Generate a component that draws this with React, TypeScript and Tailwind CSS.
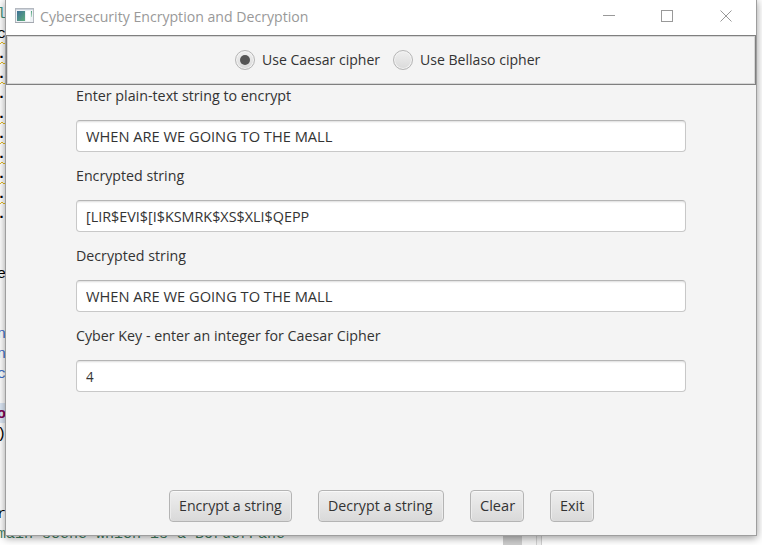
import { useLayoutEffect, useRef, useState } from "react";

/* Text condensed horizontally so that it spans a given width. */
function Fit({ text, width }: { text: string; width: number }) {
  const ref = useRef<HTMLSpanElement>(null);
  const [scale, setScale] = useState(1);
  useLayoutEffect(() => {
    if (ref.current) {
      setScale(width / ref.current.offsetWidth);
    }
  }, [text, width]);
  return (
    <span className="inline-flex whitespace-pre" style={{ width }}>
      <span ref={ref} className="shrink-0 origin-left" style={{ transform: `scaleX(${scale})` }}>
        {text}
      </span>
    </span>
  );
}

type CodeLine = { text: string; color?: string; warn?: boolean };

const blank: CodeLine = { text: "" };
const dot = "font-bold";
const code: CodeLine[] = [
  { text: "l", color: "text-[#3f8f78]" },
  { text: "c", warn: true },
  { text: ".", color: dot, warn: true },
  { text: ".", color: dot, warn: true },
  { text: ".", color: dot },
  { text: ".", color: dot, warn: true },
  { text: ".", color: dot, warn: true },
  { text: ".", color: dot, warn: true },
  { text: ".", color: dot, warn: true },
  { text: ".", color: dot, warn: true },
  { text: ".", color: dot },
  blank,
  blank,
  { text: "e" },
  blank,
  blank,
  { text: "n", color: "text-[#3f6fc8]" },
  { text: "n", color: "text-[#3f6fc8]" },
  { text: "c", color: "text-[#3f6fc8]" },
  blank,
  { text: "o", color: "w-[6px] text-[#7f0055] font-bold bg-[#dde8f6]" },
  { text: ")" },
  blank,
  blank,
  blank,
  { text: "r" },
  { text: "main scene which is a BorderPane", color: "text-[#3f7f5f]" },
];

function Squiggle() {
  return (
    <svg className="absolute left-0 top-[18px]" width="9" height="4" fill="none" stroke="#e8bc20">
      <path d="M0 3 L2 1 L4 3 L6 1 L8 3" />
    </svg>
  );
}

function Editor() {
  return (
    <div className="h-full pt-[3px] font-['Liberation_Mono',monospace] text-[15px] leading-[24px] text-black">
      {code.map((line, i) => (
        <div key={i} className={`relative h-[20px] ${line.color ?? ""}`}>
          <span className="-ml-[3px] whitespace-pre">{line.text}</span>
          {line.warn && <Squiggle />}
        </div>
      ))}
    </div>
  );
}

function AppIcon() {
  return (
    <svg width="19" height="16" viewBox="0 0 19 16">
      <defs>
        <linearGradient id="pane" x1="0" y1="0" x2="1" y2="1">
          <stop offset="0" stopColor="#3d6f96" />
          <stop offset="1" stopColor="#5fae7c" />
        </linearGradient>
        <linearGradient id="strip" x1="0" y1="0" x2="0" y2="1">
          <stop offset="0" stopColor="#4f9f7c" />
          <stop offset="1" stopColor="#b5dcc6" />
        </linearGradient>
      </defs>
      <rect x=".5" y=".5" width="18" height="14" fill="#eef2f5" stroke="#b4b9c0" />
      <rect x="1" y="1" width="17" height="1" fill="#cdd3dc" />
      <rect x="2" y="3" width="8" height="10" fill="url(#pane)" />
      <rect x="11" y="3" width="4" height="10" fill="#fff" />
      <rect x="16" y="3" width="1" height="6" fill="url(#strip)" />
      <rect x="0" y="14" width="19" height="1" fill="#a4a8b0" />
    </svg>
  );
}

function Radio({ text, width, checked }: { text: string; width: number; checked?: boolean }) {
  return (
    <label className="flex items-center gap-[7px]">
      <span className="flex size-5 items-center justify-center rounded-full border border-[#b6b6b6] bg-linear-to-b from-[#efefef] to-[#dadada] shadow-[inset_0_0_0_1px_#f4f4f4]">
        {checked && <span className="size-[10px] rounded-full bg-[#555]" />}
      </span>
      <span className="h-5 leading-[18px]">
        <Fit text={text} width={width} />
      </span>
    </label>
  );
}

function Field({ label, labelWidth, value, valueWidth }: { label: string; labelWidth: number; value: string; valueWidth: number }) {
  return (
    <div className="h-20">
      <div className="h-[35px] leading-[20px]">
        <Fit text={label} width={labelWidth} />
      </div>
      <div className="h-8 rounded-[4px] border border-[#c8c8c8] border-t-[#b5b5b5] bg-white pl-[9px] leading-[31px] shadow-[inset_0_2px_2px_-1px_#dedede]">
        <Fit text={value} width={valueWidth} />
      </div>
    </div>
  );
}

function Button({ text, width, size }: { text: string; width: number; size: string }) {
  return (
    <button
      className={`${size} flex h-8 items-center rounded-[4px] border border-[#b4b4b4] bg-linear-to-b from-[#efefef] to-[#d9d9d9] pb-px pl-[9px] shadow-[inset_0_1px_0_#f9f9f9,inset_1px_0_0_#ececec,inset_-1px_0_0_#ececec]`}
    >
      <Fit text={text} width={width} />
    </button>
  );
}

export default function App() {
  return (
    <div className="relative h-[545px] w-[762px] overflow-hidden bg-white">
      <Editor />
      <div className="absolute bottom-0 left-[503px] flex h-[12px] w-[39px]">
        <div className="w-[19px] bg-[#cdcdcd]" />
        <div className="w-[15px] border-r border-[#d0d0d0] bg-[#f3f3f3]" />
        <div className="w-[5px] border-r border-[#d0d0d0] bg-[#f0f0f0]" />
      </div>

      <main className="absolute -top-px left-[5px] flex h-[537px] w-[752px] flex-col border border-[#9e9e9e] bg-[#f4f4f4] font-['Open_Sans','Noto_Sans',sans-serif] text-[15px] text-[#333] shadow-[0_2px_8px_0px_rgba(0,0,0,0.4)]">
        <header className="flex h-[35px] shrink-0 bg-white pl-[9px] text-[#999]">
          <div className="flex h-[16px] pt-[8px]">
            <AppIcon />
          </div>
          <div className="pl-[6px] leading-[33px]">
            <Fit text="Cybersecurity Encryption and Decryption" width={268} />
          </div>
          <svg className="ml-auto mr-[22px] mt-[9px]" width="131" height="14" fill="none" stroke="#999" shapeRendering="crispEdges">
            <path d="M0 6.5H12" />
            <rect x="58.5" y="1.5" width="11" height="11" />
            <path d="M117.5 1.5L128.5 12.5M128.5 1.5L117.5 12.5" shapeRendering="auto" />
          </svg>
        </header>
        <div className="flex h-[50px] shrink-0 items-center justify-center gap-[13px] border border-[#7f7f7f] pl-[13px] shadow-[inset_0_0_0_1px_#d6d6d6]">
          <Radio text="Use Caesar cipher" width={118} checked />
          <Radio text="Use Bellaso cipher" width={120} />
        </div>
        <section className="px-[70px]">
          <Field label="Enter plain-text string to encrypt" labelWidth={215} value="WHEN ARE WE GOING TO THE MALL" valueWidth={246} />
          <Field label="Encrypted string" labelWidth={108} value="[LIR$EVI$[I$KSMRK$XS$XLI$QEPP" valueWidth={223} />
          <Field label="Decrypted string" labelWidth={110} value="WHEN ARE WE GOING TO THE MALL" valueWidth={246} />
          <Field label="Cyber Key - enter an integer for Caesar Cipher" labelWidth={305} value="4" valueWidth={8} />
        </section>
        <footer className="mb-[13px] mt-auto flex gap-[26px] pl-[163px]">
          <Button text="Encrypt a string" width={103} size="w-[123px]" />
          <Button text="Decrypt a string" width={105} size="w-[126px]" />
          <Button text="Clear" width={35} size="w-[54px]" />
          <Button text="Exit" width={24} size="w-[44px]" />
        </footer>
      </main>
    </div>
  );
}
